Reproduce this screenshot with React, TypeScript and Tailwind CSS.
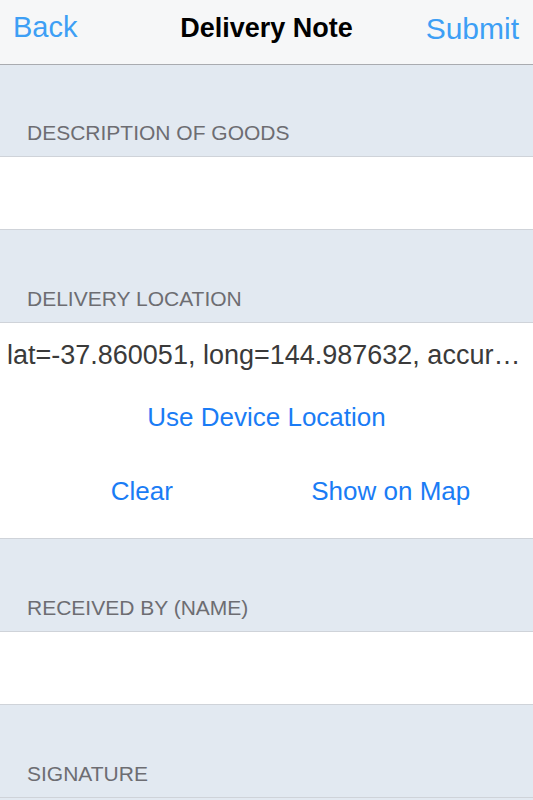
import React from 'react';

function SectionHeader({ label, first }: { label: string; first?: boolean }) {
  return (
    <div
      className={
        (first ? 'h-[92px] ' : 'h-[93px] ') +
        'bg-[#e2e9f1] border-b border-[#cfd3d9] flex items-end px-[27px] pb-[13px]'
      }
    >
      <span className="text-[21px] leading-none text-[#6d6d72]">{label}</span>
    </div>
  );
}

function EmptyRow() {
  return <div className="h-[73px] bg-white border-b border-[#cfd3d9]" />;
}

export default function App() {
  return (
    <div className="w-[533px] h-[800px] overflow-hidden bg-[#e2e9f1] font-['Liberation_Sans',Arial,sans-serif]">
      <div className="h-[65px] bg-[#f6f7f8] border-b border-[#a9abb0] grid grid-cols-[1fr_auto_1fr] items-center px-[13px] pb-[8px]">
        <span className="text-[29px] text-[#3d9ff5]">Back</span>
        <span className="text-[27px] font-bold text-black">Delivery Note</span>
        <span className="text-[30px] text-[#3d9ff5] text-right pr-[1px]">Submit</span>
      </div>

      <SectionHeader label="DESCRIPTION OF GOODS" first />
      <EmptyRow />

      <SectionHeader label="DELIVERY LOCATION" />
      <div className="bg-white border-b border-[#cfd3d9] h-[216px] flex flex-col">
        <div className="px-[7px] pt-[19px] text-[27px] leading-none text-[#3a3a3a] whitespace-nowrap">
          lat=-37.860051, long=144.987632, accur…
        </div>
        <div className="mt-[35px] text-center text-[26px] leading-none text-[#1a7cf5]">Use Device Location</div>
        <div className="mt-[48px] grid grid-cols-2 text-[26px] leading-none text-[#1a7cf5]">
          <span className="text-center pl-[17px]">Clear</span>
          <span className="text-center pr-[18px]">Show on Map</span>
        </div>
      </div>

      <SectionHeader label="RECEIVED BY (NAME)" />
      <EmptyRow />

      <SectionHeader label="SIGNATURE" />
    </div>
  );
}
